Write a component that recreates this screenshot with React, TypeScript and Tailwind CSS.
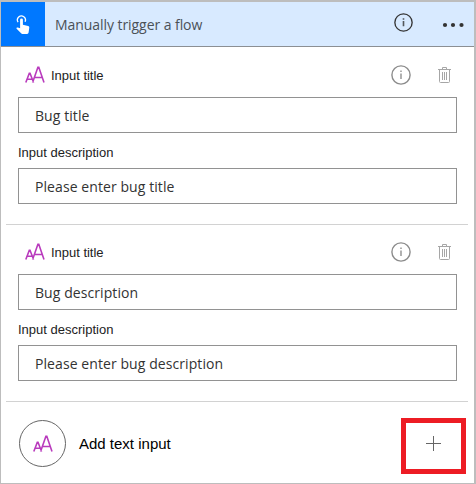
function TextIcon() {
  return (
    <svg width="20" height="18" viewBox="0 0 20 18" fill="none" stroke="#b93bbd" strokeWidth="1.6" className="shrink-0">
      <path d="M.8 16.5 4.3 7.3h.7L8.6 16.5M2.1 13.2h5.1M7.6 16.5 12.9 1.2h.9l5.2 15.3M9.2 11.5h8.2" />
    </svg>
  );
}

function InfoIcon({ size, color }: { size: number; color: string }) {
  return (
    <svg width={size} height={size} viewBox="0 0 20 20" fill="none" stroke={color} className="shrink-0">
      <circle cx="10" cy="10" r="9.1" strokeWidth="1.4" />
      <path d="M10 8.5v5.5M10 5.5v1.5" strokeWidth="1.7" opacity=".8" />
    </svg>
  );
}

function TrashIcon() {
  return (
    <svg width="13" height="16" viewBox="0 0 13 16" fill="none" stroke="#a6a6a6" className="shrink-0">
      <path d="M0 2.5h13M4.5 2V.5h4V2M1.5 2.5v12q0 1 1 1h8q1 0 1-1v-12M4.5 5v8M6.5 5v8M8.5 5v8" />
    </svg>
  );
}

function Field({ value }: { value: string }) {
  return (
    <div className="flex h-9 items-center border border-[#929292] pl-4 font-['Open_Sans','Noto_Sans',sans-serif] text-[14px] tracking-[0.08px] text-[#333]">
      <span className="whitespace-nowrap">{value}</span>
    </div>
  );
}

function InputGroup({ title, description }: { title: string; description: string }) {
  return (
    <section className="mr-[6px] ml-[5px] h-[177px] border-b border-[#d2d2d2] pr-[11px] pl-3">
      <div className="flex h-[49px] items-center pt-[5px] pl-[7px]">
        <TextIcon />
        <span className="ml-1.5 pt-px text-[13px] tracking-[-0.02px] text-[#222]">Input title</span>
        <div className="mr-[6px] ml-auto flex items-center gap-[27px]">
          <InfoIcon size={20} color="#8c8c8c" />
          <TrashIcon />
        </div>
      </div>
      <Field value={title} />
      <div className="flex h-[35px] items-center pt-1 text-[13px] text-[#222]">Input description</div>
      <Field value={description} />
    </section>
  );
}

export default function App() {
  return (
    <main className="flex h-[484px] w-[476px] flex-col border-t-2 border-r-2 border-b border-l border-[#bdbdbd] bg-white font-['Liberation_Sans',Arial,sans-serif]">
      <header className="flex h-[45px] items-center border-b border-[#8c8f93] bg-[#d8eaff]">
        <div className="flex h-full w-11 items-center justify-center bg-[#0078ff]">
          <svg width="14" height="20" viewBox="0 0 14 20" className="mt-0.5">
            <path d="M2.1 7.2A4 4 0 1 1 9 6.8" fill="none" stroke="#fff" strokeWidth="1.3" />
            <path d="M4.1 4.8a1.4 1.4 0 0 1 2.8 0v5l5.2 1.1q1.3.3 1.2 1.7l-.7 5q-.2 1.3-1.5 1.3H6.4q-.8 0-1.3-.6L.6 13.8q-.5-.8.4-1.3l.8-.1 2.3.8z" fill="#fff" />
          </svg>
        </div>
        <span className="ml-2.5 font-['Open_Sans','Noto_Sans',sans-serif] text-[14px] tracking-[-0.06px] text-[#4b5157]">Manually trigger a flow</span>
        <div className="mr-[10px] mb-[3px] ml-auto flex items-center gap-[29px]">
          <InfoIcon size={19} color="#333" />
          <svg width="22" height="6" viewBox="0 0 22 6" fill="#333" className="mt-1">
            <circle cx="3" cy="3" r="2.1" />
            <circle cx="11" cy="3" r="2.1" />
            <circle cx="19.5" cy="3" r="2.1" />
          </svg>
        </div>
      </header>
      <div className="h-px" />
      <InputGroup title="Bug title" description="Please enter bug title" />
      <InputGroup title="Bug description" description="Please enter bug description" />
      <footer className="flex flex-1 items-center pr-2 pl-[18px]">
        <div className="mt-0.5 flex size-[47px] items-center justify-center rounded-full border border-[#666]">
          <TextIcon />
        </div>
        <span className="mt-1 ml-[13px] text-[15px] text-black">Add text input</span>
        <button className="mt-[7px] ml-auto flex h-14 w-[65px] items-center justify-center border-5 border-[#ed1c24]">
          <svg width="15" height="15" viewBox="0 0 15 15" stroke="#666" className="-mt-[5px]">
            <path d="M7.5 0v15M0 7.5h15" />
          </svg>
        </button>
      </footer>
    </main>
  );
}
